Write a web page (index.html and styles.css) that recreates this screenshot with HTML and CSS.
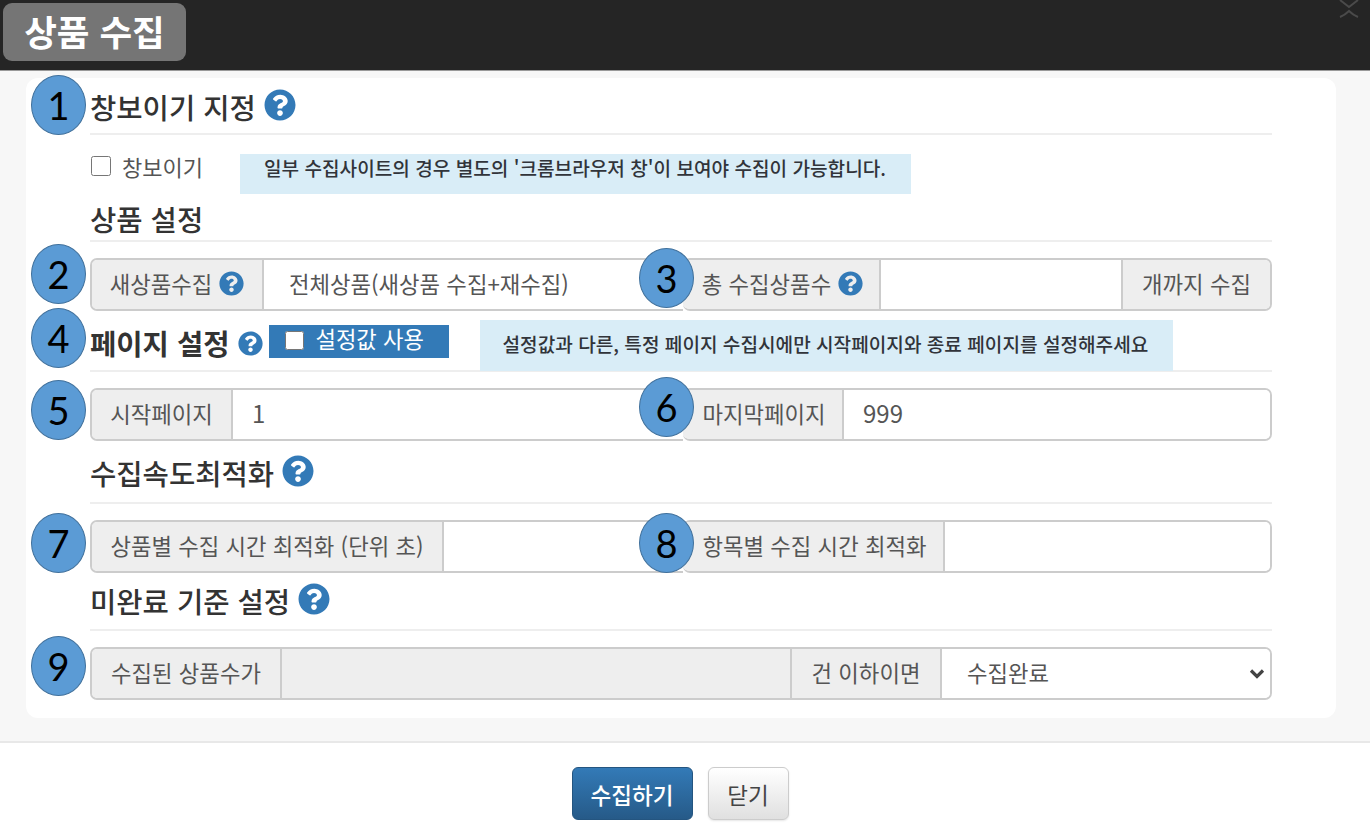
FILE: index.html
```html
<!DOCTYPE html>
<html lang="ko">
<head>
<meta charset="utf-8">
<title>상품 수집</title>
<link rel="stylesheet" href="styles.css">
</head>
<body>
<svg class="defs" width="0" height="0"><symbol id="q" viewBox="0 0 512 512"><path d="M504 256c0 136.997-111.043 248-248 248S8 392.997 8 256C8 119.083 119.043 8 256 8s248 111.083 248 248zM262.655 90c-54.497 0-89.255 22.957-116.549 63.758-3.536 5.286-2.353 12.415 2.715 16.258l34.699 26.31c5.205 3.947 12.621 3.008 16.665-2.122 17.864-22.658 30.113-35.797 57.303-35.797 20.429 0 45.698 13.148 45.698 32.958 0 14.976-12.363 22.667-32.534 33.976C247.128 238.528 216 254.941 216 296v4c0 6.627 5.373 12 12 12h56c6.627 0 12-5.373 12-12v-1.333c0-28.462 83.186-29.647 83.186-106.667 0-58.002-60.165-102-116.531-102zM256 338c-25.365 0-46 20.635-46 46 0 25.364 20.635 46 46 46s46-20.636 46-46c0-25.365-20.635-46-46-46z"/></symbol></svg>
<div class="modal">
  <header class="top">
    <h1 class="title">상품 수집</h1>
    <svg class="close" width="20" height="18" viewBox="0 0 20 18"><path d="M1 0 L10 7 L19 0 M1 17 Q6 15 10 11 Q14 15 19 17" fill="none" stroke="#4a4a4a" stroke-width="2"/></svg>
  </header>
  <main class="body">
    <section class="card">
      <div class="head h1st"><h2>창보이기 지정</h2><svg class="q q30"><use href="#q"/></svg></div>
      <div class="check-row">
        <label class="check"><input type="checkbox"><span>창보이기</span></label>
        <p class="note note-a">일부 수집사이트의 경우 별도의 '크롬브라우저 창'이 보여야 수집이 가능합니다.</p>
      </div>
      <div class="head h2nd"><h2>상품 설정</h2></div>
      <div class="group">
        <div class="ig left">
          <span class="addon w172">새상품수집 <svg class="q q24"><use href="#q"/></svg></span>
          <input class="field pad-l" value="전체상품(새상품 수집+재수집)">
        </div>
        <div class="ig right">
          <span class="addon w198">총 수집상품수 <svg class="q q24"><use href="#q"/></svg></span>
          <input class="field">
          <span class="addon w149 bl">개까지 수집</span>
        </div>
      </div>
      <div class="head h-page">
        <h2 class="strong">페이지 설정</h2><svg class="q q24 page-q"><use href="#q"/></svg>
        <label class="use-box"><input type="checkbox"><span>설정값 사용</span></label>
        <p class="note note-b">설정값과 다른, 특정 페이지 수집시에만 시작페이지와 종료 페이지를 설정해주세요</p>
      </div>
      <div class="group">
        <div class="ig left">
          <span class="addon w141">시작페이지</span>
          <input class="field digits" value="1">
        </div>
        <div class="ig right">
          <span class="addon w161">마지막페이지</span>
          <input class="field digits" value="999">
        </div>
      </div>
      <div class="head h-speed"><h2>수집속도최적화</h2><svg class="q q30"><use href="#q"/></svg></div>
      <div class="group">
        <div class="ig left">
          <span class="addon w352">상품별 수집 시간 최적화 (단위 초)</span>
          <input class="field">
        </div>
        <div class="ig right">
          <span class="addon w262">항목별 수집 시간 최적화</span>
          <input class="field">
        </div>
      </div>
      <div class="head h-done"><h2>미완료 기준 설정</h2><svg class="q q30"><use href="#q"/></svg></div>
      <div class="ig whole">
        <span class="addon w190">수집된 상품수가</span>
        <input class="field off" disabled>
        <span class="addon w151 bl">건 이하이면</span>
        <select class="field pick"><option>수집완료</option></select>
      </div>
    </section>
  </main>
  <footer class="foot">
    <button class="btn primary">수집하기</button>
    <button class="btn plain">닫기</button>
  </footer>
  <span class="num n1">1</span>
  <span class="num n2">2</span>
  <span class="num n3">3</span>
  <span class="num n4">4</span>
  <span class="num n5">5</span>
  <span class="num n6">6</span>
  <span class="num n7">7</span>
  <span class="num n8">8</span>
  <span class="num n9">9</span>
</div>
</body>
</html>
```
FILE: styles.css
```css
* { box-sizing: border-box; }
html, body { margin: 0; padding: 0; background: #fff; }
body { font-family: "Noto Sans CJK KR", "Noto Sans", sans-serif; color: #333; overflow: hidden; }
.defs { position: absolute; }
.modal { position: relative; width: 1370px; height: 833px; }
.top { position: relative; height: 71px; background: #252525; padding: 3px; border-bottom: 1px solid #999; }
.title { margin: 0; width: 183px; height: 58px; background: #757575; border-radius: 9px; color: #fff; font-size: 35.5px; font-weight: 700; line-height: 56px; text-align: center; }
.close { position: absolute; right: 11px; top: 0; }
.body { height: 672px; background: #f7f7f7; padding: 7px 34px 0 26px; border-bottom: 2px solid #e8e8e8; }
.card { height: 640px; background: #fff; border-radius: 12px; padding: 0 64px; }
.head { display: flex; align-items: center; border-bottom: 2px solid #eee; }
h2 { margin: 0; font-size: 28.6px; font-weight: 500; color: #333; line-height: 36px; white-space: nowrap; }
.h1st { height: 57px; padding-top: 3px; }
.h2nd { height: 48px; padding-top: 3px; }
.h-page { height: 61px; align-items: flex-start; padding-top: 9px; }
.h-speed { height: 63px; padding-top: 3px; }
.h-done { height: 58px; }
.strong { font-weight: 700; line-height: 46px; }
.q { fill: #337ab7; display: inline-block; flex: none; }
.q30 { width: 32px; height: 32px; margin-left: 8px; margin-top: -4px; }
.q24 { width: 25px; height: 25px; margin-left: 1px; }
.page-q { margin: 11px 0 0 8px; }
.check-row { display: flex; align-items: flex-start; height: 59px; }
.check { display: flex; align-items: center; width: 150px; margin-top: 16px; height: 30px; font-size: 22px; color: #555; }
.check input { width: 20px; height: 20px; margin: 0 11px 0 1px; }
.note { margin: 0; background: #d9edf7; color: #31343a; font-weight: 500; white-space: nowrap; }
.note-a { margin-top: 19px; height: 40px; width: 671px; padding-left: 24px; font-size: 19.1px; line-height: 29px; }
.use-box { display: flex; align-items: flex-start; margin: 5px 0 0 6px; width: 180px; height: 33px; background: #337ab7; color: #fff; font-size: 22.2px; line-height: 26px; padding-left: 16px; flex: none; }
.use-box input { width: 19px; height: 19px; margin: 6px 12px 0 0; }
.note-b { margin-left: 31px; height: 51px; width: 693px; padding-left: 23px; font-size: 19.1px; line-height: 48px; flex: none; }
.group { display: grid; grid-template-columns: 593px 589px; margin-top: 16px; }
.ig { display: flex; height: 53px; border: 2px solid #ccc; border-radius: 7px; overflow: hidden; background: #fff; }
.left { border-right: 0; border-radius: 7px 0 0 7px; }
.right { border-left: 0; border-radius: 7px; }
.right .addon:first-child { padding-left: 3px; }
.whole { margin-top: 16px; width: 1182px; }
.addon { flex: none; display: flex; align-items: center; justify-content: center; gap: 6px; padding-bottom: 3px; background: #eee; color: #555; font-size: 22.3px; border-right: 2px solid #ccc; white-space: nowrap; }
.bl { border-left: 2px solid #ccc; }
.w141 { width: 141px; }
.w161 { width: 161px; }
.w172 { width: 172px; }
.w190 { width: 190px; }
.w198 { width: 198px; }
.w149 { width: 149px; border-right: 0; }
.w151 { width: 152px; }
.w262 { width: 262px; }
.w352 { width: 352px; }
.field { flex: 1; min-width: 0; border: 0; outline: 0; padding: 0 0 4px 20px; background: #fff; color: #555; font: 22.3px "Noto Sans CJK KR", "Noto Sans", sans-serif; }
.digits { font-size: 24px; padding-left: 19px; }
.pad-l { padding-left: 25px; }
.off { flex: none; width: 508px; background: #eee; }
.pick { padding-left: 25px; appearance: none; background: #fff url("data:image/svg+xml,%3Csvg xmlns='http://www.w3.org/2000/svg' width='16' height='12' viewBox='0 0 16 12'%3E%3Cpath d='M2 2.5 L8 8.5 L14 2.5' fill='none' stroke='%23444' stroke-width='3.2'/%3E%3C/svg%3E") no-repeat right 5px center; }
.foot { display: flex; justify-content: center; align-items: flex-start; gap: 15px; padding: 24px 0 0 0; margin-left: -10px; }
.btn { height: 53px; font: 500 22.5px "Noto Sans CJK KR", "Noto Sans", sans-serif; border-radius: 6px; padding: 0; }
.primary { width: 121px; color: #fff; border: 1px solid #245580; background: linear-gradient(#337ab7, #265a88); }
.plain { width: 81px; color: #444; font-weight: 400; border: 1px solid #ccc; background: linear-gradient(#fff, #e0e0e0); box-shadow: 0 1px 2px rgba(0,0,0,.1); }
.num { position: absolute; display: flex; align-items: center; justify-content: center; width: 55px; height: 60px; border-radius: 50%; background: #5b9bd5; border: 1.5px solid #41719c; color: #000; font: 38px "Lato", sans-serif; }
.n1 { left: 31px; top: 75px; }
.n2 { left: 31px; top: 244px; }
.n3 { left: 639px; top: 248px; }
.n4 { left: 31px; top: 308px; }
.n5 { left: 31px; top: 380px; }
.n6 { left: 639px; top: 377px; }
.n7 { left: 31px; top: 513px; }
.n8 { left: 639px; top: 513px; }
.n9 { left: 31px; top: 636px; }
```
